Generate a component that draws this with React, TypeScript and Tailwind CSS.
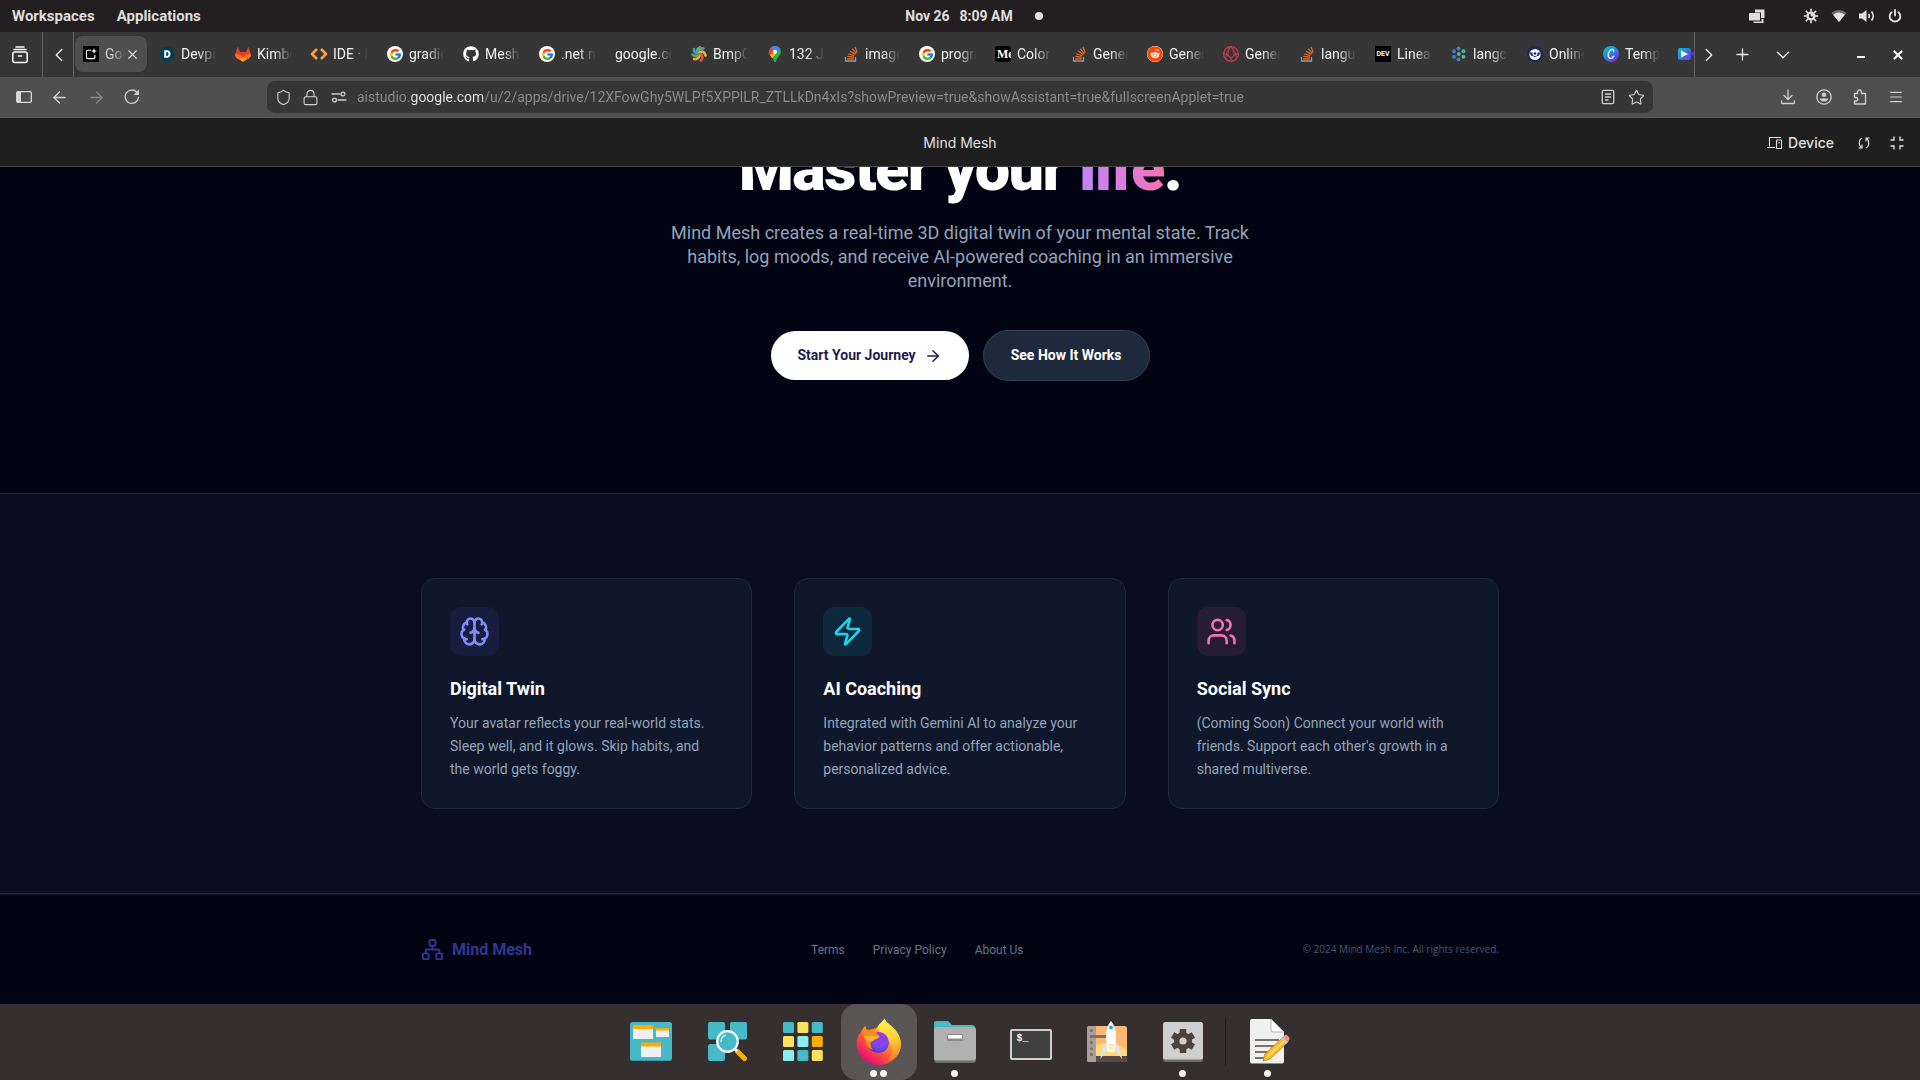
import React from 'react';
import {
  ArrowLeft,
  ArrowRight,
  Brain,
  ChevronDown,
  ChevronLeft,
  ChevronRight,
  Lock,
  Menu,
  Network,
  Plus,
  Shield,
  Star,
  Users,
  X,
  Zap,
} from 'lucide-react';
import { FaGithub, FaReddit } from 'react-icons/fa';
import { FcGoogle } from 'react-icons/fc';

/* ---------- favicons ---------- */

const GoogleIcon = () => (
  <span className="flex size-4 items-center justify-center rounded-full bg-white">
    <FcGoogle size={13} />
  </span>
);

const GitlabIcon = () => (
  <svg width="16" height="16" viewBox="0 0 16 16">
    <path d="M2.800.8L5 6h6l2.200-5.200 2.400 6.500c.6 2 0 3.700-1.600 4.900L8 15.700l-6-3.500C.4 11-.2 9.300.4 7.300z" fill="#e24329" />
    <path d="M15.800 7.800c.3 1.800-.4 3.300-1.800 4.400l-2.500 1.500L8 11.200c2-2 4.800-3.200 7.800-3.400zM.2 7.800c-.3 1.800.4 3.300 1.800 4.400l2.500 1.500L8 11.200C6 9.200 3.200 8 .2 7.800z" fill="#fc6d26" />
    <path d="M8 11l3.600 2.600L8 15.700l-3.600-2.100z" fill="#fca326" />
  </svg>
);

const StackIcon = () => (
  <svg width="16" height="16" viewBox="0 0 16 16" fill="none">
    <path d="M2.500 11v4h10v-4" stroke="#9a9c9f" strokeWidth="1.3" />
    <path
      d="M4.2 12.8h6.6M4.4 10.4l6.5.8M5.2 7.8l6.2 2M7 5l5.3 3.6M9.3 2.6l4 5M12 1l2.2 5.6"
      stroke="#ee6a23"
      strokeWidth="1.2"
    />
  </svg>
);

const StudioIcon = () => (
  <svg width="16" height="16" viewBox="0 0 16 16" fill="none" className="shrink-0">
    <rect width="16" height="16" fill="#000" />
    <path d="M8 4.2H5.2a1.7 1.7 0 00-1.7 1.7v5a1.7 1.7 0 001.7 1.7h5a1.7 1.7 0 001.7-1.7V9" stroke="#fff" strokeWidth="1.1" />
    <path d="M11 2l.8 2.2L14 5l-2.2.8L11 8l-.8-2.2L8 5l2.2-.8z" fill="#fff" />
  </svg>
);

const DevpostIcon = () => (
  <svg width="16" height="16" viewBox="0 0 16 16">
    <path d="M4.2 1.2h7.6L15.8 8l-4 6.8H4.2L.2 8z" fill="#003e54" />
    <path d="M5.2 4.2h2.6c2.4 0 3.700 1.500 3.700 3.800s-1.300 3.800-3.700 3.800H5.200zM7.200 6v4h.7c1.100 0 1.600-.8 1.600-2s-.5-2-1.600-2z" fill="#fff" fillRule="evenodd" />
  </svg>
);

const CodeIcon = () => (
  <svg width="18" height="16" viewBox="0 0 18 16" fill="none" stroke="#fba13b" strokeWidth="2.6" strokeLinejoin="round" className="shrink-0">
    <path d="M7 3L2 8l5 5" />
    <path d="M11 3l5 5-5 5" />
  </svg>
);

const SwirlIcon = () => (
  <svg width="16" height="16" viewBox="0 0 16 16" fill="none" strokeWidth="2.6" strokeLinecap="round">
    <path d="M7 7.500C4.500 7 2.500 5.500 3 3" stroke="#4a93c9" />
    <path d="M7.500 6.500C7 4 9 2 12.500 2.500" stroke="#3f9fcf" />
    <path d="M9 6.500c2.500-2 5 0 5.500 3" stroke="#e9b33b" />
    <path d="M9.500 8c2.500 1.500 2.500 4.500.5 6.500" stroke="#e4572e" />
    <path d="M8.500 9.500c-.5 2.500-3 4-5.500 3.500" stroke="#f0a63c" />
    <path d="M7 9c-2 1.500-4.500 1-5.500-.5" stroke="#5aa55c" />
    <path d="M6 5.500C6 3.500 7.500 1.800 9 1.400" stroke="#63b05c" />
  </svg>
);

const MapsIcon = () => (
  <svg width="12" height="16" viewBox="0 0 12 16">
    <path d="M6 0a6 6 0 016 6c0 3.500-4 5-5 9.300a1 1 0 01-2 0C4 11 0 9.500 0 6a6 6 0 016-6z" fill="#34a853" />
    <path d="M6 0a6 6 0 015.500 3.600L6 6 2 1.600A6 6 0 016 0z" fill="#4285f4" />
    <path d="M2 1.600L6 6l-5.200 3A6 6 0 012 1.600z" fill="#ea4335" />
    <path d="M.8 9L6 6l1.500 1.500-4.300 4.800C2.200 11 1.300 10 .8 9z" fill="#fbbc04" />
    <circle cx="6" cy="5.800" r="2" fill="#fff" />
  </svg>
);

const MediumIcon = () => (
  <span className="flex size-4 items-center overflow-hidden rounded-[3px] bg-black pl-[2px] font-['Liberation_Serif',serif] text-[12px] font-bold leading-4 text-white">
    Me
  </span>
);

const DevIcon = () => (
  <span className="flex size-4 items-center justify-center bg-black font-['Roboto',sans-serif] text-[7px] font-bold leading-4 text-white">
    DEV
  </span>
);

const RedGlobeIcon = () => (
  <svg width="16" height="16" viewBox="0 0 16 16" fill="none" stroke="#d8394f" strokeWidth=".9">
    <circle cx="8" cy="8" r="7.400" strokeWidth="1.100" />
    <path d="M8 .6C4 4 2.500 8 3 13.400M8 .6c4 3.400 5.500 7.400 5 12.800M8 .6C5.500 4 4.500 7 5 9.500L8 12l3-2.500C11.500 7 10.500 4 8 .6M.8 7.500C5 9 8 11 9.500 15.200M15.200 7.500C11 9 8 11 6.500 15.200" />
  </svg>
);

const DotsIcon = () => (
  <svg width="16" height="16" viewBox="0 0 16 16">
    <g fill="#3f7fc8">
      <circle cx="7.500" cy="2.600" r="2" />
      <circle cx="3" cy="5.300" r="2" />
      <circle cx="3" cy="10.700" r="2" />
      <circle cx="7.500" cy="13.400" r="2" />
    </g>
    <g fill="#4cb79a">
      <circle cx="7.800" cy="8" r="2" />
      <circle cx="12.500" cy="5.300" r="2" />
      <circle cx="12.500" cy="10.700" r="2" />
    </g>
  </svg>
);

const EyeBadgeIcon = () => (
  <svg width="16" height="16" viewBox="0 0 16 16">
    <circle cx="8" cy="8" r="8" fill="#20265c" />
    <circle cx="8" cy="8.500" r="5.600" fill="#fff" />
    <path d="M2.500 6.500h11L12 9.500 8 11 4 9.500z" fill="#20265c" />
    <circle cx="8" cy="7.500" r="2.500" fill="#fff" />
    <circle cx="8" cy="7.500" r="1.300" fill="#20265c" />
  </svg>
);

const CanvaIcon = () => (
  <svg width="16" height="16" viewBox="0 0 16 16" fill="none">
    <defs>
      <linearGradient id="canva" x1="2" y1="1" x2="12" y2="15" gradientUnits="userSpaceOnUse">
        <stop stopColor="#00c4cc" />
        <stop offset=".55" stopColor="#2f7de0" />
        <stop offset="1" stopColor="#7d2ae8" />
      </linearGradient>
    </defs>
    <circle cx="8" cy="8" r="8" fill="url(#canva)" />
    <path d="M10.400 5.800c.6-1.300.2-2.400-1-2.400-2.200 0-4.200 3-4.200 5.900 0 1.900.9 3.100 2.400 3.100 1.400 0 2.500-1 3.200-2.300" stroke="#fff" strokeWidth="1.200" strokeLinecap="round" />
  </svg>
);

const VideoIcon = () => (
  <svg width="18" height="16" viewBox="0 0 18 16" className="shrink-0">
    <defs>
      <linearGradient id="video" x1="1" y1="4" x2="13" y2="14" gradientUnits="userSpaceOnUse">
        <stop stopColor="#15b5c6" />
        <stop offset=".5" stopColor="#3a6ee0" />
        <stop offset="1" stopColor="#7a35e0" />
      </linearGradient>
    </defs>
    <rect y="2" width="13" height="12" rx="2" fill="url(#video)" />
    <path d="M13 7l5-3v8l-5-3z" fill="#5b2bc9" />
    <path d="M3 4.500L10 8l-7 3.500z" fill="#fff" />
  </svg>
);

const tabs: { title: string; icon?: React.ReactNode }[] = [
  { title: 'Devpost', icon: <DevpostIcon /> },
  { title: 'Kimberly', icon: <GitlabIcon /> },
  { title: 'IDE · Hub', icon: <CodeIcon /> },
  { title: 'gradient', icon: <GoogleIcon /> },
  { title: 'Mesh lib', icon: <FaGithub size={16} color="#ffffff" /> },
  { title: '.net maui', icon: <GoogleIcon /> },
  { title: 'google.com' },
  { title: 'BmpCon', icon: <SwirlIcon /> },
  { title: '132 Jack', icon: <MapsIcon /> },
  { title: 'image', icon: <StackIcon /> },
  { title: 'program', icon: <GoogleIcon /> },
  { title: 'Color', icon: <MediumIcon /> },
  { title: 'Genera', icon: <StackIcon /> },
  { title: 'Genera', icon: <FaReddit size={16} color="#ff4500" className="rounded-full bg-white" /> },
  { title: 'Genera', icon: <RedGlobeIcon /> },
  { title: 'langua', icon: <StackIcon /> },
  { title: 'Linear', icon: <DevIcon /> },
  { title: 'langch', icon: <DotsIcon /> },
  { title: 'Online', icon: <EyeBadgeIcon /> },
  { title: 'Templ', icon: <CanvaIcon /> },
  { title: '', icon: <VideoIcon /> },
];

/* ---------- desktop top bar ---------- */

const SystemBar = () => (
  <header className="grid h-8 shrink-0 grid-cols-3 items-center bg-[#231f20] px-3 text-[15px] font-bold text-[#dededd]">
    <div className="flex gap-[22px]">
      <button>Workspaces</button>
      <button>Applications</button>
    </div>
    <div className="flex items-center justify-center pl-7 text-[14px]">
      <span className="mr-[10px]">Nov 26</span>
      <span>8:09 AM</span>
      <span className="ml-[22px] size-2 rounded-full bg-[#dededd]" />
    </div>
    <div className="flex items-center justify-end gap-3 pr-[5px]">
      <svg width="16" height="16" viewBox="0 0 16 16" fill="#dededd" className="mr-[26px]">
        <path d="M6 1.500h9.500v8.500H12V4.500H6z" />
        <rect y="5" width="11" height="7.500" rx=".5" />
        <path d="M4.500 13.500H12.500V11H14.500v4H4.500z" />
      </svg>
      <svg width="16" height="16" viewBox="0 0 16 16" fill="none" stroke="#dededd">
        <circle cx="8" cy="8" r="3.400" strokeWidth="2.400" />
        <path d="M8 .8v3M8 12.200v3M.8 8h3M12.200 8h3M2.900 2.900L5 5M11 11l2.100 2.100M2.900 13.100L5 11M11 5l2.100-2.100" strokeWidth="1.700" />
        <circle cx="9" cy="7" r="1.500" fill="#dededd" stroke="none" />
      </svg>
      <svg width="16" height="16" viewBox="0 0 16 16">
        <path d="M8 14L.5 5a11 11 0 0115 0z" fill="#6f6c6c" />
        <path d="M8 14L2.200 6.800a8.500 8.500 0 0111.600 0z" fill="#e4e4e3" />
      </svg>
      <svg width="16" height="16" viewBox="0 0 16 16" fill="none">
        <path d="M0 5.500h3L7.500 2v12L3 10.500H0z" fill="#dededd" />
        <path d="M9.500 6a3 3 0 010 4" stroke="#dededd" strokeWidth="1.600" />
        <path d="M12.500 3.500a7 7 0 010 9" stroke="#dededd" strokeWidth="1.800" />
      </svg>
      <svg width="16" height="16" viewBox="0 0 16 16" fill="none" stroke="#dededd" strokeWidth="1.900" strokeLinecap="round">
        <path d="M8 2v5.500M4.600 4.200a5.300 5.300 0 106.800 0" />
      </svg>
    </div>
  </header>
);

/* ---------- browser chrome ---------- */

const TabStrip = () => (
  <div className="flex h-[45px] shrink-0 bg-[#363636] text-[14px] text-[#f0f0f0]">
    <button className="flex w-[43px] items-center justify-center border-r border-[#636363] pr-[3px]" title="Firefox View">
      <svg width="18" height="18" viewBox="0 0 18 18" fill="none" stroke="#fbfbfe" strokeWidth="1.500" strokeLinecap="round">
        <rect x="1.800" y="6" width="14.400" height="10.500" rx="2" />
        <path d="M3 3.500h12M5 1h8M7.500 10h3" />
      </svg>
    </button>
    <button className="flex w-[31px] items-center justify-center border-r border-[#636363] pl-[2px]" title="Scroll left">
      <ChevronLeft size={22} strokeWidth={1.5} />
    </button>
    <div className="flex min-w-0 flex-1 overflow-hidden border-r border-[#636363]">
      <div className="w-[76px] shrink-0 py-1">
        <div className="mr-[3px] ml-px flex h-9 items-center rounded-lg bg-[#4f4f4f] pr-2 pl-2 text-[#cccccc] shadow">
          <StudioIcon />
          <span className="ml-[6px] w-[20px] shrink-0 overflow-hidden whitespace-nowrap [mask-image:linear-gradient(90deg,#000_8px,transparent)]">Google</span>
          <button title="Close tab" className="shrink-0 text-[#e0e0e0]">
            <X size={15} strokeWidth={1.8} />
          </button>
        </div>
      </div>
      {tabs.map((tab, i) => (
        <div key={i} className="flex h-11 w-[76px] shrink-0 items-center pl-[9px]">
          {tab.icon && <span className="mr-[6px] flex w-4 shrink-0 justify-center">{tab.icon}</span>}
          <span className="mr-[10px] flex-1 overflow-hidden whitespace-nowrap [mask-image:linear-gradient(90deg,#000_calc(100%-18px),transparent)]">
            {tab.title}
          </span>
        </div>
      ))}
    </div>
    <button className="flex w-7 items-center justify-center" title="Scroll right">
      <ChevronRight size={22} strokeWidth={1.5} />
    </button>
    <button className="ml-[3px] flex w-8 items-center justify-center" title="New tab">
      <Plus size={19} strokeWidth={1.6} />
    </button>
    <button className="ml-[9px] flex w-8 items-center justify-center" title="List all tabs">
      <ChevronDown size={22} strokeWidth={1.5} />
    </button>
    <button className="ml-[46px] flex w-8 items-center justify-center pt-[5px]" title="Minimize">
      <span className="h-[2px] w-2 bg-white" />
    </button>
    <button className="mr-[6px] ml-[5px] flex w-8 items-center justify-center" title="Close">
      <X size={14} strokeWidth={4} />
    </button>
  </div>
);

const urlText =
  'aistudio.google.com/u/2/apps/drive/12XFowGhy5WLPf5XPPlLR_ZTLLkDn4xIs?showPreview=true&showAssistant=true&fullscreenApplet=true';

const NavBar = () => (
  <div className="flex h-[41px] shrink-0 items-center border-b border-[#5c5c5c] bg-[#4f4f4f] text-[#d0d0d0]">
    <div className="flex w-[267px] shrink-0 items-center gap-[18px] pl-4">
      <button title="Sidebar">
        <svg width="16" height="16" viewBox="0 0 16 16" fill="none">
          <rect x=".7" y="2.700" width="14.600" height="10.600" rx="1" stroke="#d8d8d8" strokeWidth="1.300" />
          <path d="M1 3h4v10H1z" fill="#d8d8d8" />
        </svg>
      </button>
      <button title="Back">
        <ArrowLeft size={19} strokeWidth={1.7} />
      </button>
      <button title="Forward" className="text-[#868686]">
        <ArrowRight size={19} strokeWidth={1.7} />
      </button>
      <button title="Reload">
        <svg width="16" height="16" viewBox="0 0 16 16" fill="none" stroke="currentColor" strokeWidth="1.300">
          <path d="M12.800 3.200A6.700 6.700 0 1014.500 8.500" strokeLinecap="round" />
          <path d="M15 .5V6H9.500z" fill="currentColor" stroke="none" />
        </svg>
      </button>
    </div>
    <div className="flex h-8 min-w-0 flex-1 items-center rounded-lg bg-[#363636] px-2">
      <Shield size={17} strokeWidth={1.6} className="shrink-0" />
      <Lock size={17} strokeWidth={1.6} className="ml-[10px] shrink-0" />
      <svg width="16" height="16" viewBox="0 0 16 16" fill="none" stroke="currentColor" strokeWidth="1.300" className="ml-[12px] shrink-0">
        <path d="M1 5h8M7 11h8" strokeLinecap="round" />
        <circle cx="12" cy="5" r="1.900" />
        <circle cx="3.500" cy="11" r="1.900" />
      </svg>
      <input
        aria-label="Address"
        defaultValue={urlText}
        className="ml-[10px] h-8 min-w-0 flex-1 bg-transparent bg-[linear-gradient(90deg,#8c8c8c_54px,#ececec_54px,#ececec_126px,#8c8c8c_126px)] bg-clip-text text-[14px] text-transparent outline-none"
      />
      <svg width="14" height="16" viewBox="0 0 14 16" fill="none" stroke="currentColor" strokeWidth="1.300" className="mr-[13px] shrink-0">
        <rect x="1.300" y="1.300" width="11.400" height="13.400" rx="1.500" />
        <path d="M4 5h6M4 8h6M4 11h3.500" />
      </svg>
      <Star size={17} strokeWidth={1.6} className="shrink-0" />
    </div>
    <div className="flex w-[267px] shrink-0 items-center justify-end gap-5 pr-4">
      <button title="Downloads">
        <svg width="16" height="16" viewBox="0 0 16 16" fill="none" stroke="currentColor" strokeWidth="1.300" strokeLinecap="round" strokeLinejoin="round">
          <path d="M8 1v9M4 6.500L8 10.500l4-4M1.500 12v1.500a1 1 0 001 1h11a1 1 0 001-1V12" />
        </svg>
      </button>
      <button title="Account">
        <svg width="16" height="16" viewBox="0 0 16 16" fill="none">
          <circle cx="8" cy="8" r="7.200" stroke="currentColor" strokeWidth="1.300" />
          <circle cx="8" cy="5.800" r="2.200" fill="currentColor" />
          <path d="M4 9.500h8c0 2-1.800 3-4 3s-4-1-4-3z" fill="currentColor" />
        </svg>
      </button>
      <button title="Extensions">
        <svg width="16" height="16" viewBox="0 0 16 16" fill="none" stroke="currentColor" strokeWidth="1.300" strokeLinejoin="round">
          <path d="M5.500 4.500V3a2 2 0 014 0v1.500h4v10.500h-11v-3h1.500a1.700 1.700 0 000-3.500H2.500v-4z" />
        </svg>
      </button>
      <button title="Menu">
        <Menu size={16} strokeWidth={1.800} />
      </button>
    </div>
  </div>
);

const AppletBar = () => (
  <div className="grid h-[49px] shrink-0 grid-cols-3 items-center border-b border-[#444444] bg-[#1f1f1f] px-4 pt-px font-['Inter',sans-serif] text-[14px] text-[#e0e0e0]">
    <span />
    <span className="text-center">Mind Mesh</span>
    <div className="flex items-center justify-end">
      <button className="flex items-center gap-[6px] font-medium">
        <svg width="15" height="14" viewBox="0 0 15 14" fill="none" stroke="currentColor" strokeWidth="1.100">
          <path d="M14 1.500H2.500v9M0 11.500h8" />
          <rect x="9.500" y="4" width="5" height="8.500" rx=".5" />
          <path d="M12 6v1.500" />
        </svg>
        <span>Device</span>
      </button>
      <button className="ml-6" title="Reload app">
        <svg width="12" height="14" viewBox="0 0 12 14" fill="none" stroke="currentColor" strokeWidth="1.200">
          <path d="M4 2C1 3.500 0 8 3 11.500M.5 12H4V8.500" />
          <path d="M8 12c3-1.500 4-6 1-9.500M11.500 2H8v3.500" />
        </svg>
      </button>
      <button className="ml-5" title="Exit fullscreen">
        <svg width="14" height="14" viewBox="0 0 14 14" fill="none" stroke="currentColor" strokeWidth="1.300">
          <path d="M4 .5V4H.5M10 .5V4h3.500M4 13.500V10H.5M10 13.500V10h3.500" />
        </svg>
      </button>
    </div>
  </div>
);

/* ---------- landing page ---------- */

const features = [
  {
    title: 'Digital Twin',
    text: 'Your avatar reflects your real-world stats. Sleep well, and it glows. Skip habits, and the world gets foggy.',
    icon: <Brain size={31} className="text-[#818cf8]" />,
    box: 'bg-[#161d3d]',
  },
  {
    title: 'AI Coaching',
    text: 'Integrated with Gemini AI to analyze your behavior patterns and offer actionable, personalized advice.',
    icon: <Zap size={31} className="text-[#22d3ee]" />,
    box: 'bg-[#0e293b]',
  },
  {
    title: 'Social Sync',
    text: "(Coming Soon) Connect your world with friends. Support each other's growth in a shared multiverse.",
    icon: <Users size={31} className="text-[#f472b6]" />,
    box: 'bg-[#261c35]',
  },
];

const Hero = () => (
  <section className="flex flex-col items-center overflow-hidden pb-28 text-center">
    <h1 className="-mt-[34px] text-[63px] font-black leading-[72px] tracking-tight text-white">
      Master your{' '}
      <span className="bg-gradient-to-r from-[#c084fc] to-[#f472b6] bg-clip-text text-transparent">life</span>.
    </h1>
    <p className="mt-4 max-w-[605px] text-[18px] leading-6 text-[#94a3b8]">
      Mind Mesh creates a real-time 3D digital twin of your mental state. Track habits, log moods, and receive
      AI-powered coaching in an immersive environment.
    </p>
    <div className="mt-[37px] flex items-center gap-[14px] text-[14px] font-bold">
      <button className="flex h-[49px] items-center gap-2 rounded-full bg-white px-[27px] text-[#1e1b4b]">
        Start Your Journey
        <ArrowRight size={18} />
      </button>
      <button className="h-[51px] rounded-full border border-[#334155] bg-[#1e293b] px-[27px] text-white">
        See How It Works
      </button>
    </div>
  </section>
);

const Features = () => (
  <section className="border-y border-[#1e293b] bg-[#080d1f] px-6 py-[84px]">
    <div className="mx-auto grid max-w-[1078px] grid-cols-3 gap-[42px]">
      {features.map((f) => (
        <article key={f.title} className="rounded-[14px] border border-[#1e293b] bg-[#0f172a] px-7 pt-7 pb-[27px]">
          <div className={`flex size-[49px] items-center justify-center rounded-[11px] ${f.box}`}>{f.icon}</div>
          <h3 className="mt-[19px] text-[18px] font-bold leading-7 text-white">{f.title}</h3>
          <p className="mt-[9px] pr-2 text-[14px] leading-[23px] text-[#94a3b8]">{f.text}</p>
        </article>
      ))}
    </div>
  </section>
);

const Footer = () => (
  <footer className="flex flex-1 items-center border-t border-[#111a2e] px-6">
    <div className="mx-auto flex w-full max-w-[1078px] items-center justify-between">
      <div className="flex items-center gap-2 text-[16px] font-bold text-[#34368c]">
        <Network size={23} />
        Mind Mesh
      </div>
      <nav className="flex gap-7 text-[12px] text-[#64748b]">
        <a href="#terms">Terms</a>
        <a href="#privacy">Privacy Policy</a>
        <a href="#about">About Us</a>
      </nav>
      <p className="font-['Open_Sans',sans-serif] text-[10px] text-[#475569]">© 2024 Mind Mesh Inc. All rights reserved.</p>
    </div>
  </footer>
);

/* ---------- dock ---------- */

const WorkspacesIcon = () => (
  <svg width="42" height="40" viewBox="0 0 42 40">
    <rect y="1" width="42" height="38" rx="2.500" fill="#379aa8" />
    <rect width="42" height="38" rx="2.500" fill="#48b9c7" />
    <path d="M3 4h20v13H3zM26 7h13v8H26zM11 22h20v13H11z" fill="#f0f0f0" />
    <path d="M3 3h20v4H3zM26 6h13v2.500H26zM11 20.500h20v4H11z" fill="#ffad00" />
  </svg>
);

const SearchIcon = () => (
  <svg width="40" height="40" viewBox="0 0 40 40">
    <g fill="#48b9c7">
      <rect x="1" width="17" height="17.500" rx="2" />
      <rect x="23" width="17" height="17.500" rx="2" />
      <rect x="1" y="22" width="17" height="17" rx="2" />
    </g>
    <path d="M30.500 29.500l7 7" stroke="#ffad00" strokeWidth="5" strokeLinecap="round" />
    <path d="M27 26l3 3" stroke="#fff" strokeWidth="2.500" />
    <circle cx="20.500" cy="19.500" r="10.300" fill="#48b9c7" stroke="#fff" strokeWidth="2.200" />
    <path d="M14 20a7 7 0 015-7" stroke="#fff" strokeWidth="1.300" fill="none" />
  </svg>
);

const gridColors = ['#48b9c7', '#fae15f', '#48b9c7', '#fae15f', '#8eecec', '#ffad00', '#8eecec', '#48b9c7', '#fae15f'];

const GridIcon = () => (
  <svg width="40" height="40" viewBox="0 0 40 40">
    {gridColors.map((c, i) => (
      <rect key={i} x={(i % 3) * 14.400} y={Math.floor(i / 3) * 14} width="11" height="11" rx="1.500" fill={c} />
    ))}
  </svg>
);

const FirefoxIcon = () => (
  <svg width="46" height="48" viewBox="0 0 46 48">
    <defs>
      <linearGradient id="fxBody" x1="38" y1="6" x2="8" y2="44" gradientUnits="userSpaceOnUse">
        <stop stopColor="#fff44f" />
        <stop offset=".3" stopColor="#ffb02e" />
        <stop offset=".6" stopColor="#ff5a36" />
        <stop offset="1" stopColor="#e3007f" />
      </linearGradient>
      <radialGradient id="fxGlobe" cx=".6" cy=".3" r=".8">
        <stop stopColor="#a034e8" />
        <stop offset=".5" stopColor="#7a4df0" />
        <stop offset="1" stopColor="#4d2fb0" />
      </radialGradient>
      <linearGradient id="fxTail" x1="30" y1="0" x2="40" y2="38" gradientUnits="userSpaceOnUse">
        <stop stopColor="#fff44f" />
        <stop offset=".5" stopColor="#ffd43a" />
        <stop offset="1" stopColor="#ff8a2a" />
      </linearGradient>
    </defs>
    <path d="M5 14C6 11 8 9 9.500 8c0 2 .5 3 1.500 4l8-1 10-9c2 4 13 8 15.500 20C47 36 36 47 23 47S.5 37 .5 25C.5 21 2 17 5 14z" fill="url(#fxBody)" />
    <path d="M28.500.5c2 4 5 6 8 9.500 1.500 1 2.500 2 3.500 3.500 5 7 6 14 3 21-2 4-6 7-11 8 6-6 5-16-1-22-4-4-9-7-9-12 1-3 4-4 6.500-8z" fill="url(#fxTail)" />
    <circle cx="22.500" cy="24.500" r="10.500" fill="url(#fxGlobe)" />
    <path d="M9.500 8c0 3 2 4.500 4.500 4.500 2 0 3.500-2 5-3-.5 2-.5 4 1 5.500l3.500 3c-.5 2-3.500 2.500-5 3.500-1.500 1.500-4 2-4 5 0 2 1 3.500 2.500 5-5-1-8-6-7.500-11C6 18 7 12 9.500 8z" fill="#ff8b1f" />
    <path d="M8 19c4-2 11-1 15.500-.5-1 2-4 2.500-5.500 3.500-2 1-4 2-8 0z" fill="#ffb52c" />
  </svg>
);

const FilesIcon = () => (
  <svg width="42" height="44" viewBox="0 0 42 44">
    <path d="M2 1h12l4 4h20a3 3 0 013 3v8H0V3a2 2 0 012-2z" fill="#48b9c7" />
    <rect y="8" width="42" height="35" rx="3" fill="#6d6d6d" />
    <rect y="7" width="42" height="33.500" rx="3" fill="#b0b0b0" />
    <rect x="13" y="14" width="16" height="7" rx="1" fill="#8a8a8a" />
    <rect x="14" y="15" width="14" height="3.500" rx=".5" fill="#fff" />
  </svg>
);

const TerminalIcon = () => (
  <div className="mt-1 h-[31px] w-[42px] rounded-[2px] border-2 border-[#cfcfcf] bg-[#404040] pl-[5px] text-left font-['Liberation_Mono',monospace] text-[10px] font-bold leading-[15px] text-white">
    $_
  </div>
);

const RocketIcon = () => (
  <svg width="42" height="44" viewBox="0 0 42 44">
    <rect x="1" y="6" width="40" height="36" rx="2.500" fill="#ffb871" />
    <path d="M10 25c10-4 20 0 31 4v9H10z" fill="#ffd97a" />
    <path d="M8 36h33v3.500a2.500 2.500 0 01-2.500 2.500H8z" fill="#574a44" />
    <path d="M3.500 6H10v36H3.500A2.500 2.500 0 011 39.500v-31A2.500 2.500 0 013.500 6z" fill="#a89f9c" />
    <g fill="#7b7270">
      <circle cx="5.500" cy="10.500" r="1.600" />
      <circle cx="5.500" cy="22.500" r="1.600" />
      <circle cx="5.500" cy="28.500" r="1.600" />
      <circle cx="5.500" cy="34.500" r="1.600" />
      <path d="M4 15h18v3H4z" />
    </g>
    <path d="M20 23c-4 4-5 9-5.500 16l6-8.500h9l6.500 8.500c-.5-7-2-12-6-16z" fill="#e3e3e3" />
    <path d="M25 1c4 5 5 10 5 17l-1.500 14h-7L20 18c0-7 1-12 5-17z" fill="#fff" />
    <circle cx="25" cy="7.500" r="1.900" fill="#2ba7bd" />
    <path d="M22 25h6.500M22 28h6.500" stroke="#ffd04a" strokeWidth="1.200" />
  </svg>
);

const SettingsIcon = () => (
  <svg width="40" height="40" viewBox="0 0 40 40">
    <rect y="1" width="40" height="39" rx="2.500" fill="#6f6b6a" />
    <rect width="40" height="37.500" rx="2.500" fill="#cfcfcf" />
    <g stroke="#4a423e" strokeWidth="6.500">
      <path d="M20 7v24M9.600 13l20.800 12M9.600 25l20.800-12" />
    </g>
    <circle cx="20" cy="19" r="9" fill="#4a423e" />
    <circle cx="20" cy="19" r="3.600" fill="#cfcfcf" />
  </svg>
);

const EditorIcon = () => (
  <svg width="42" height="46" viewBox="0 0 42 46">
    <path d="M3 1h19l13 13v29a2 2 0 01-2 2H3a2 2 0 01-2-2V3a2 2 0 012-2z" fill="#8b8b8b" />
    <path d="M3 0h19l13 13v29a2 2 0 01-2 2H3a2 2 0 01-2-2V2a2 2 0 012-2z" fill="#f0f0f0" />
    <path d="M22 0l13 13H24a2 2 0 01-2-2z" fill="#fff" stroke="#b5b5b5" strokeWidth="1" />
    <path d="M6 21h24M6 27h20M6 33h16M6 39h10" stroke="#7b7371" strokeWidth="2" />
    <path d="M14 42l2-7 18-17 5 5-18 17z" fill="#f5c02c" stroke="#b57b12" strokeWidth=".8" />
    <path d="M18 38l18.500-17.500" stroke="#ffe07a" strokeWidth="1.500" />
    <path d="M32 20l2-2 5 5-2 2z" fill="#c9c9c9" />
    <path d="M34 18l2-2c1.500-1 5.500 3 4.500 4.500L39 23z" fill="#f28b82" />
  </svg>
);

const dockItems = [
  { name: 'Workspaces', icon: <WorkspacesIcon />, dots: 0 },
  { name: 'Launcher', icon: <SearchIcon />, dots: 0 },
  { name: 'Applications', icon: <GridIcon />, dots: 0 },
  { name: 'Firefox', icon: <FirefoxIcon />, dots: 2, active: true },
  { name: 'Files', icon: <FilesIcon />, dots: 1 },
  { name: 'Terminal', icon: <TerminalIcon />, dots: 0 },
  { name: 'Shop', icon: <RocketIcon />, dots: 0 },
  { name: 'Settings', icon: <SettingsIcon />, dots: 1 },
  { name: 'Text Editor', icon: <EditorIcon />, dots: 1, separated: true },
];

const Dock = () => (
  <div className="flex h-[76px] shrink-0 items-center justify-center bg-[#35302f] pr-[2px]">
    {dockItems.map((item) => (
      <React.Fragment key={item.name}>
        {item.separated && <div className="mx-1 h-12 w-px bg-[#211e1d]" />}
        <button
          title={item.name}
          className={`relative flex size-[76px] items-center justify-center ${item.active ? 'rounded-[16px] bg-[#585554]' : ''} ${item.separated ? 'pl-1' : ''}`}
        >
          {item.icon}
          <span className="absolute inset-x-0 bottom-[3px] flex justify-center gap-[3px]">
            {Array.from({ length: item.dots }).map((_, i) => (
              <span key={i} className="size-[7px] rounded-full bg-[#f5f5f5]" />
            ))}
          </span>
        </button>
      </React.Fragment>
    ))}
  </div>
);

const App: React.FC = () => {
  return (
    <div className="flex h-screen flex-col overflow-hidden bg-[#020414] font-['Roboto',sans-serif]">
      <SystemBar />
      <TabStrip />
      <NavBar />
      <AppletBar />
      <main className="flex min-h-0 flex-1 flex-col overflow-hidden">
        <Hero />
        <Features />
        <Footer />
      </main>
      <Dock />
    </div>
  );
};

export default App;
